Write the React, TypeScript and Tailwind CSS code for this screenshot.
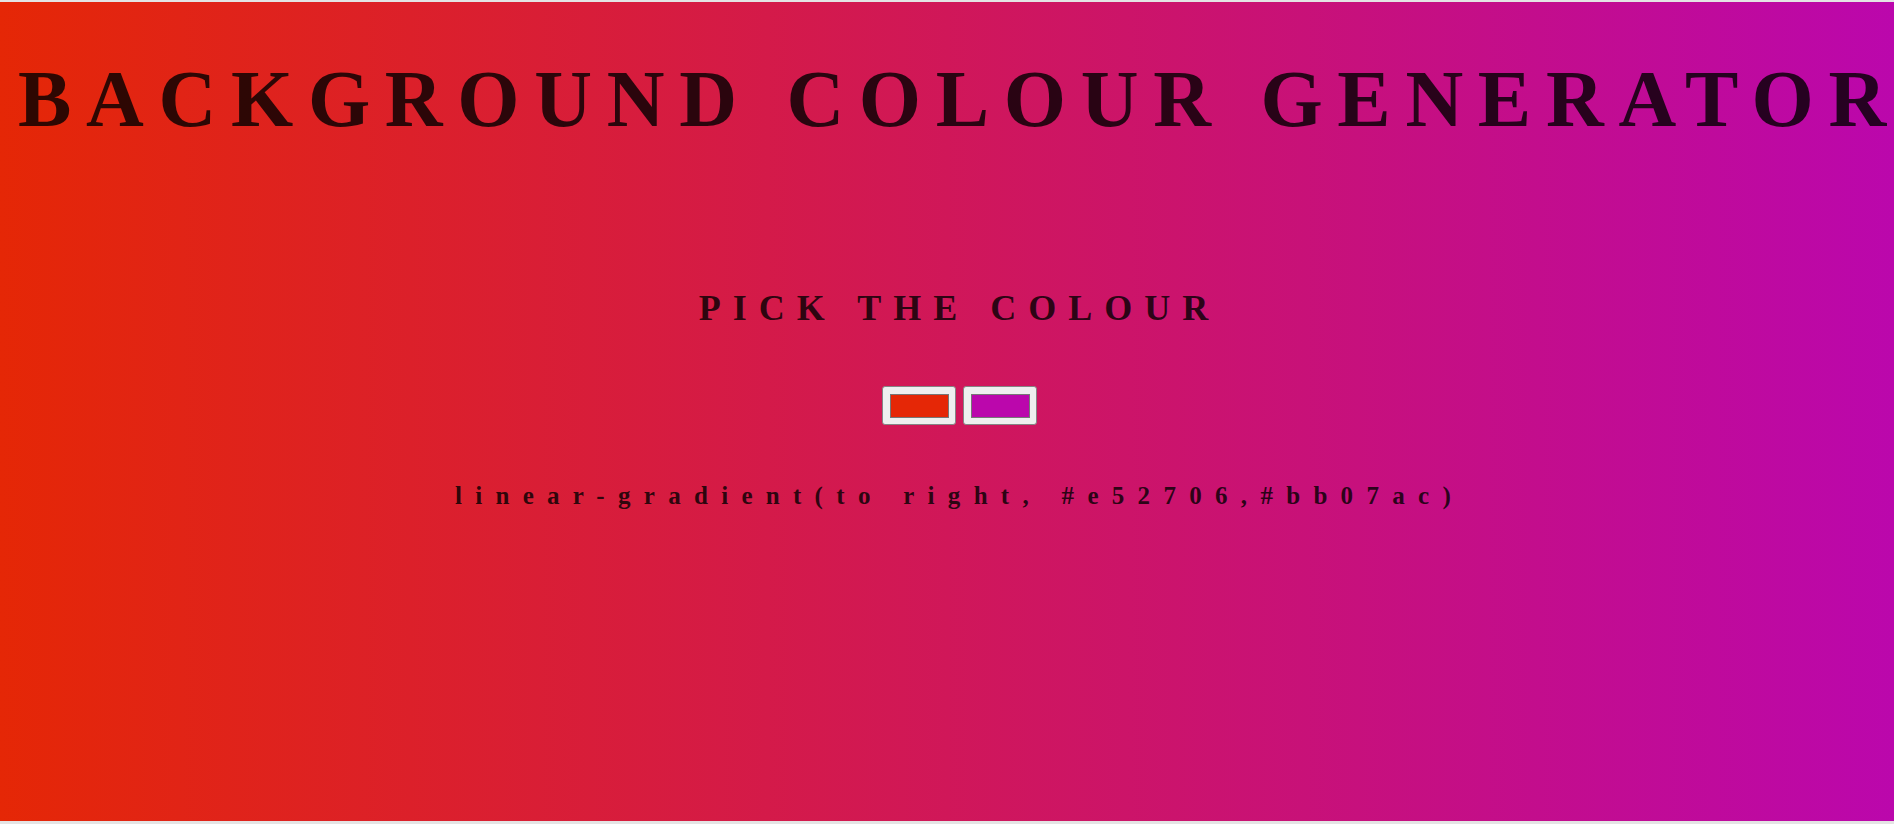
const Swatch = ({ color }: { color: string }) => {
  return (
    <div className="w-[74px] h-[39px] bg-[#efefef] border border-[#858585] rounded-[3px] flex items-center justify-center">
      <div className="w-[59px] h-[24px] border border-[#777]" style={{ backgroundColor: color }} />
    </div>
  );
};

const App = () => {
  const left = "#e52706";
  const right = "#bb07ac";

  return (
    <div className="w-full h-[824px] bg-[#e4e4e4] pt-[2px] pb-[3px] overflow-hidden">
      <main
        className="h-full w-full bg-[linear-gradient(to_right,#e52706,#bb07ac)] text-black/80 font-bold"
        style={{ fontFamily: '"Liberation Serif", "Times New Roman", serif' }}
      >
        {/* title */}
        <h1 className="pt-[57px] pl-[18px] whitespace-nowrap text-[80px] leading-[80px] tracking-[14.7px]">
          BACKGROUND COLOUR GENERATOR
        </h1>

        <div className="flex flex-col items-center pl-[25px]">
          <h2 className="mt-[151px] text-[36px] leading-[36px] tracking-[12px] whitespace-nowrap">
            PICK THE COLOUR
          </h2>

          {/* colour pickers */}
          <div className="flex gap-[7px] mt-[60px]">
            <Swatch color={left} />
            <Swatch color={right} />
          </div>

          <h3 className="mt-[58px] text-[25px] leading-[25px] tracking-[13.3px] whitespace-nowrap">
            linear-gradient(to right, {left},{right})
          </h3>
        </div>
      </main>
    </div>
  );
};

export default App;
